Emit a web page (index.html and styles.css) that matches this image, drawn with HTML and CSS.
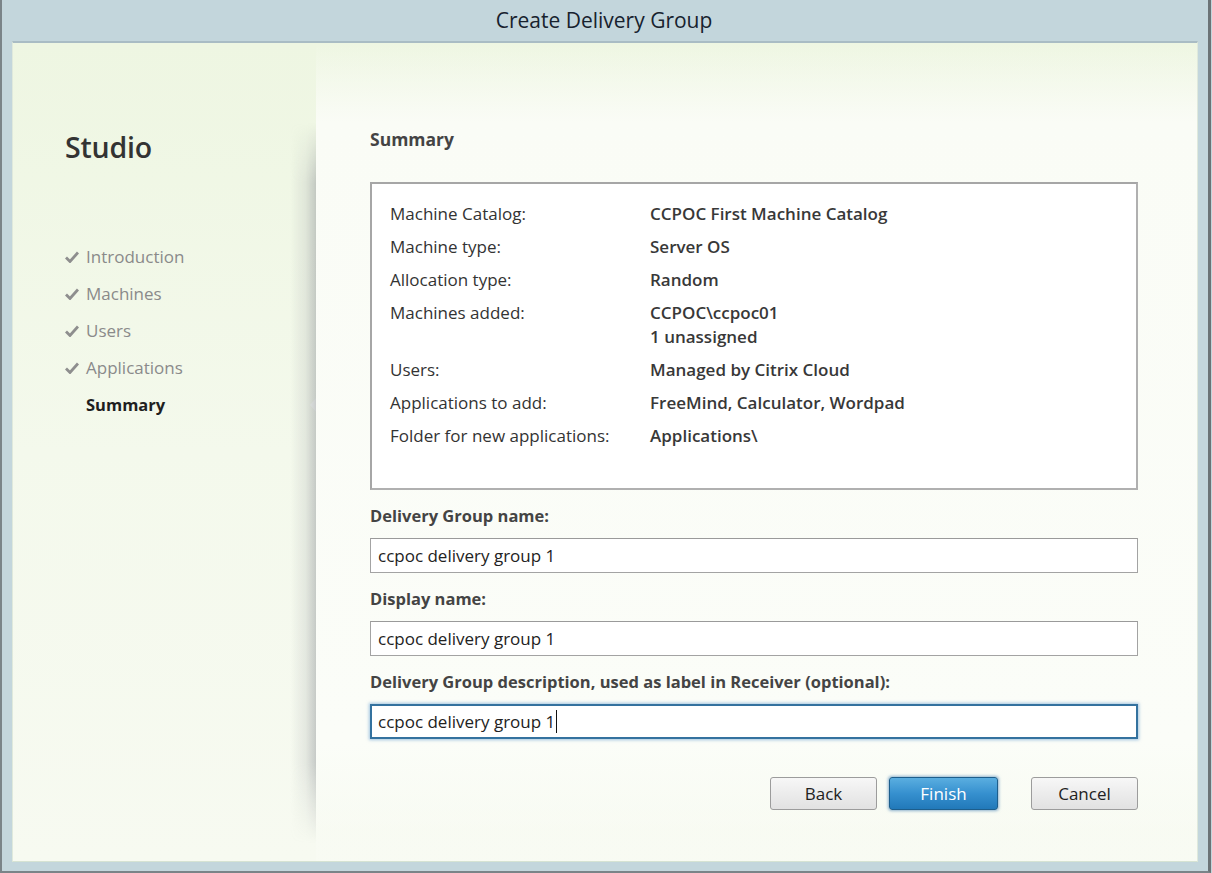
FILE: index.html
```html
<!DOCTYPE html>
<html>
<head>
<meta charset="utf-8">
<link rel="stylesheet" href="styles.css">
</head>
<body>
<div class="window">
  <div class="titlebar">Create Delivery Group</div>
  <div class="panel">
    <aside class="sidebar">
      <div class="brand">Studio</div>
      <ul class="steps">
        <li class="step done"><svg class="check" viewBox="0 0 14 12"><path d="M1 6.5 L5 10.5 L13 1.5" fill="none" stroke="#8e8e8e" stroke-width="2.8"/></svg>Introduction</li>
        <li class="step done"><svg class="check" viewBox="0 0 14 12"><path d="M1 6.5 L5 10.5 L13 1.5" fill="none" stroke="#8e8e8e" stroke-width="2.8"/></svg>Machines</li>
        <li class="step done"><svg class="check" viewBox="0 0 14 12"><path d="M1 6.5 L5 10.5 L13 1.5" fill="none" stroke="#8e8e8e" stroke-width="2.8"/></svg>Users</li>
        <li class="step done"><svg class="check" viewBox="0 0 14 12"><path d="M1 6.5 L5 10.5 L13 1.5" fill="none" stroke="#8e8e8e" stroke-width="2.8"/></svg>Applications</li>
        <li class="step active">Summary</li>
      </ul>
    </aside>
    <main class="content">
      <h2 class="heading">Summary</h2>
      <div class="summary">
        <div class="row"><div class="key">Machine Catalog:</div><div class="val">CCPOC First Machine Catalog</div></div>
        <div class="row"><div class="key">Machine type:</div><div class="val">Server OS</div></div>
        <div class="row"><div class="key">Allocation type:</div><div class="val">Random</div></div>
        <div class="row"><div class="key">Machines added:</div><div class="val">CCPOC\ccpoc01<br>1 unassigned</div></div>
        <div class="row"><div class="key">Users:</div><div class="val">Managed by Citrix Cloud</div></div>
        <div class="row"><div class="key">Applications to add:</div><div class="val">FreeMind, Calculator, Wordpad</div></div>
        <div class="row"><div class="key">Folder for new applications:</div><div class="val">Applications\</div></div>
      </div>
      <div class="field">
        <label class="flabel">Delivery Group name:</label>
        <div class="input">ccpoc delivery group 1</div>
      </div>
      <div class="field">
        <label class="flabel">Display name:</label>
        <div class="input">ccpoc delivery group 1</div>
      </div>
      <div class="field">
        <label class="flabel">Delivery Group description, used as label in Receiver (optional):</label>
        <div class="input focused">ccpoc delivery group 1<span class="caret"></span></div>
      </div>
      <div class="buttons">
        <button class="btn">Back</button>
        <button class="btn primary">Finish</button>
        <button class="btn cancel">Cancel</button>
      </div>
    </main>
  </div>
</div>
</body>
</html>
```

FILE: styles.css
```css
* { box-sizing: border-box; }
html, body { margin: 0; padding: 0; }
body {
  width: 1212px;
  height: 873px;
  overflow: hidden;
  background: #c3d6dc;
  font-family: "Open Sans", "Noto Sans", sans-serif;
  color: #333;
}
.window {
  width: 1211px;
  height: 873px;
  background: #c3d6dc;
  border-left: 2px solid #7a8488;
  border-right: 3px solid #6b7376;
  border-bottom: 2px solid #7a8488;
  display: flex;
  flex-direction: column;
}
.titlebar {
  height: 41px;
  flex: none;
  text-align: center;
  font-size: 21px;
  line-height: 40px;
  color: #17222e;
  padding-right: 2px;
}
.panel {
  flex: none;
  height: 821px;
  margin: 0 10px 0 10px;
  border-top: 2px solid #a9bcc4;
  border-left: 1px solid #dfe9dc;
  border-right: 1px solid #dfe9dc;
  border-bottom: 1px solid #d6e3d3;
  background: linear-gradient(to bottom, #eef6e2 0%, #f4f9ec 50%, #f7faf1 100%);
  display: flex;
}
.sidebar {
  width: 303px;
  flex: none;
  padding-top: 84px;
}
.brand {
  padding-left: 52px;
  font-size: 28.5px;
  font-weight: 600;
  color: #333;
  line-height: 40px;
  letter-spacing: -0.2px;
}
.steps {
  list-style: none;
  margin: 71px 0 0 0;
  padding: 0;
}
.step {
  position: relative;
  height: 37px;
  line-height: 37px;
  font-size: 17px;
  color: #8a8a8a;
  padding-left: 73px;
  display: flex;
  align-items: center;
}
.step .check {
  width: 14px;
  height: 12px;
  margin-left: -21px;
  margin-right: 7px;
}
.step.active {
  color: #1f1f1f;
  font-weight: 700;
  font-size: 16.5px;
}
.step.active::after {
  content: "";
  position: absolute;
  right: -1px;
  top: 11px;
  border-top: 8px solid transparent;
  border-bottom: 8px solid transparent;
  border-right: 7px solid #fbfdf8;
}
.content {
  flex: 1;
  position: relative;
  padding: 84px 59px 0 54px;
  background: linear-gradient(to bottom, rgba(251,253,247,0) 0px, #fafcf6 80px, #fbfdf8 700px, rgba(251,253,247,0.3) 790px);
}
.content::before {
  content: "";
  position: absolute;
  left: -26px;
  top: 80px;
  width: 26px;
  height: 720px;
  background: linear-gradient(to right, rgba(150,155,160,0) 0%, rgba(150,155,160,0.18) 60%, rgba(140,145,150,0.45) 100%);
  -webkit-mask-image: linear-gradient(to bottom, transparent 0, #000 60px, #000 640px, transparent 720px);
  mask-image: linear-gradient(to bottom, transparent 0, #000 60px, #000 640px, transparent 720px);
}
.heading {
  margin: 0;
  font-size: 17.5px;
  font-weight: 700;
  color: #444;
  line-height: 24px;
}
.summary {
  margin-top: 31px;
  height: 308px;
  background: #fff;
  border: 2px solid #a6a6a6;
  border-right-color: #b0b0b0;
  border-bottom-color: #b0b0b0;
  padding: 18px 0 0 18px;
  display: flex;
  flex-direction: column;
  gap: 9px;
}
.row {
  display: flex;
  font-size: 17px;
  line-height: 24px;
}
.key {
  width: 260px;
  flex: none;
  color: #333;
}
.val {
  color: #383838;
  font-weight: 600;
}
.field {
  margin-top: 14px;
}
.flabel {
  display: block;
  font-size: 16.5px;
  font-weight: 700;
  color: #444;
  line-height: 24px;
}
.input {
  margin-top: 10px;
  height: 35px;
  background: #fff;
  border: 1px solid #a3a3a3;
  border-top-color: #9a9a9a;
  padding-left: 7px;
  font-size: 17px;
  line-height: 33px;
  color: #222;
}
.input.focused {
  border: 2px solid #34729f;
  line-height: 31px;
  padding-left: 6px;
  box-shadow: 0 0 3px 1px rgba(90,150,205,0.55);
}
.caret {
  display: inline-block;
  width: 1px;
  height: 23px;
  background: #111;
  vertical-align: middle;
  margin-left: 1px;
  margin-top: -3px;
}
.buttons {
  margin-top: 38px;
  display: flex;
  justify-content: flex-end;
}
.btn {
  width: 107px;
  height: 33px;
  font-family: "Open Sans", "Noto Sans", sans-serif;
  font-size: 17px;
  color: #222;
  background: linear-gradient(to bottom, #f7f7f7 0%, #ececec 50%, #e2e2e2 100%);
  border: 1px solid #9c9c9c;
  border-radius: 3px;
  padding: 0;
  line-height: 30px;
}
.btn.primary {
  width: 109px;
  margin-left: 12px;
  color: #fff;
  background: linear-gradient(to bottom, #5aaee0 0%, #3690cf 50%, #2179b9 100%);
  border: 1px solid #1d5e8c;
  box-shadow: 0 0 3px 1px rgba(70,130,180,0.6);
}
.btn.cancel {
  margin-left: 33px;
}
```
